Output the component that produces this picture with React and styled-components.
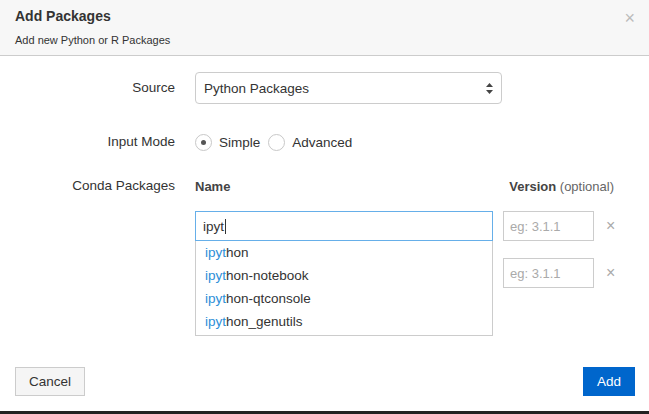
import React from "react";
import styled, { createGlobalStyle } from "styled-components";

const Global = createGlobalStyle`
  html, body { margin: 0; padding: 0; background: #fff; }
  body { font-family: "Liberation Sans", Arial, sans-serif; color: #333; }
`;

const Modal = styled.div`
  width: 649px; height: 414px; box-sizing: border-box;
  display: flex; flex-direction: column; border-bottom: 3px solid #222;
`;
const Header = styled.div`
  height: 56px; box-sizing: border-box; background: #f7f7f7;
  border-bottom: 1px solid #ccc; padding: 8px 15px 0; position: relative;
`;
const Title = styled.div`font-size: 14px; font-weight: bold; color: #333; line-height: 16px;`;
const Sub = styled.div`font-size: 11px; color: #333; margin-top: 10px;`;
const Close = styled.div`
  position: absolute; right: 14px; top: 8px; font-size: 18px; color: #bbb;
`;
const Body = styled.div`
  flex: 1; display: grid; grid-template-columns: 175px 1fr; column-gap: 20px;
  padding-top: 16px; align-content: start; font-size: 13.5px;
`;
const Label = styled.div`
  text-align: right; height: ${p => p.h}px; line-height: ${p => p.h}px;
  margin-bottom: ${p => p.mb || 0}px;
`;
const Cell = styled.div`
  height: ${p => p.h}px; margin-bottom: ${p => p.mb || 0}px;
  display: flex; align-items: center; position: relative;
`;
const Select = styled.div`
  width: 307px; height: 32px; box-sizing: border-box; border: 1px solid #ccc;
  border-radius: 4px; padding: 0 8px; display: flex; align-items: center;
  justify-content: space-between; font-size: 13.5px;
`;
const Radio = styled.span`
  width: 17px; height: 17px; border-radius: 50%; border: 1px solid #c8c8c8;
  box-sizing: border-box; display: inline-flex; align-items: center; justify-content: center;
  margin-right: 7px; margin-left: ${p => p.ml || 0}px;
  &::after { content: ""; width: 5px; height: 5px; border-radius: 50%;
    background: ${p => p.on ? "#555" : "transparent"}; }
`;
const HeadRow = styled.div`
  width: 419px; display: flex; justify-content: space-between; font-size: 13px;
`;
const Bold = styled.span`font-weight: bold; color: #444;`;
const Light = styled.span`color: #666;`;
const PkgRows = styled.div`display: flex; flex-direction: column; gap: 17px; margin-top: 15px;`;
const PkgRow = styled.div`display: flex; align-items: center; height: 30px; position: relative;`;
const NameInput = styled.div`
  width: 298px; height: 30px; box-sizing: border-box; border: 1px solid #66afe9;
  padding: 0 7px; display: flex; align-items: center; font-size: 13.5px;
  visibility: ${p => p.hidden ? "hidden" : "visible"};
`;
const Caret = styled.span`width: 1px; height: 15px; background: #333; margin-left: 1px;`;
const VerInput = styled.div`
  margin-left: 10px; width: 91px; height: 30px; box-sizing: border-box;
  border: 1px solid #ccc; padding: 0 6px; display: flex; align-items: center;
  color: #aaa; font-size: 13px;
`;
const Remove = styled.span`margin-left: 12px; color: #aaa; font-size: 16px;`;
const Dropdown = styled.div`
  position: absolute; left: 0; top: 30px; width: 298px; box-sizing: border-box;
  border: 1px solid #ccc; border-top: none; background: #fff; padding: 2px 0 0; z-index: 2;
`;
const Item = styled.div`height: 23px; line-height: 20px; padding-left: 9px; font-size: 13.5px;`;
const Hl = styled.span`color: #2d8fd8;`;
const Footer = styled.div`
  display: flex; justify-content: space-between; padding: 0 14px 15px 15px;
`;
const Btn = styled.div`
  height: 29px; box-sizing: border-box; padding: 0 ${p => p.px}px; display: flex; align-items: center;
  font-size: 13.5px; border: 1px solid ${p => p.primary ? "#0065cc" : "#ccc"};
  background: ${p => p.primary ? "#0066cc" : "#f5f5f5"}; color: ${p => p.primary ? "#fff" : "#333"};
`;

const items = ["hon", "hon-notebook", "hon-qtconsole", "hon_genutils"];

export default function App() {
  return (
    <Modal>
      <Global />
      <Header>
        <Title>Add Packages</Title>
        <Sub>Add new Python or R Packages</Sub>
        <Close>×</Close>
      </Header>
      <Body>
        <Label h={32} mb={28}>Source</Label>
        <Cell h={32} mb={28}>
          <Select>Python Packages
            <svg width="7" height="11" viewBox="0 0 7 11"><path d="M3.5 0L7 4H0z M3.5 11L0 7h7z" fill="#444"/></svg>
          </Select>
        </Cell>
        <Label h={20} mb={24}>Input Mode</Label>
        <Cell h={20} mb={24}>
          <Radio on />Simple<Radio ml={8} />Advanced
        </Cell>
        <Label h={20} mb={0}>Conda Packages</Label>
        <Cell h={20}>
          <HeadRow><Bold>Name</Bold><span><Bold>Version</Bold> <Light>(optional)</Light></span></HeadRow>
        </Cell>
        <div />
        <PkgRows>
          <PkgRow>
            <NameInput>ipyt<Caret /></NameInput>
            <VerInput>eg: 3.1.1</VerInput><Remove>×</Remove>
            <Dropdown>
              {items.map(s => <Item key={s}><Hl>ipyt</Hl>{s}</Item>)}
            </Dropdown>
          </PkgRow>
          <PkgRow>
            <NameInput hidden>x</NameInput>
            <VerInput>eg: 3.1.1</VerInput><Remove>×</Remove>
          </PkgRow>
        </PkgRows>
      </Body>
      <Footer>
        <Btn px={13}>Cancel</Btn>
        <Btn primary px={13}>Add</Btn>
      </Footer>
    </Modal>
  );
}
